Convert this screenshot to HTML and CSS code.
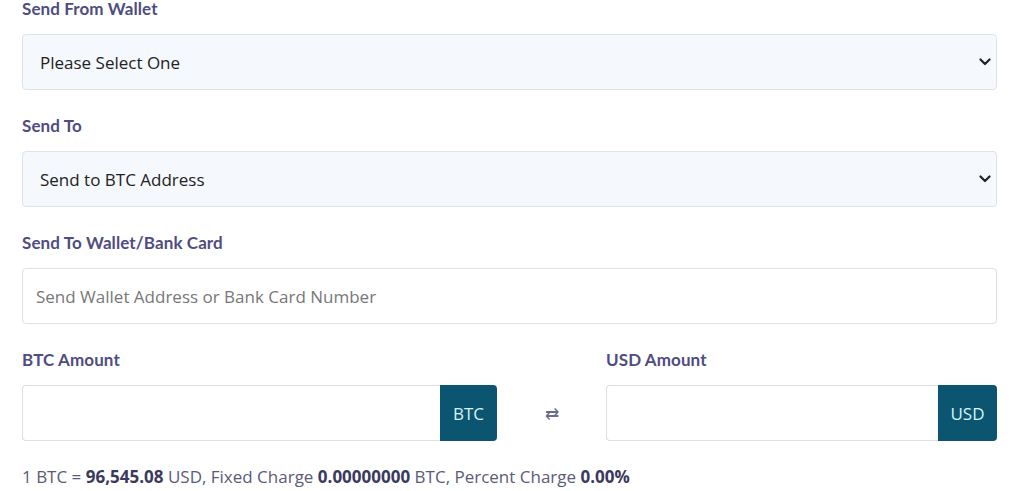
FILE: index.html
```html
<!DOCTYPE html>
<html>
<head>
<meta charset="utf-8">
<link rel="stylesheet" href="styles.css">
</head>
<body>
<form class="form">
  <div class="group">
    <label class="label">Send From Wallet</label>
    <div class="select-wrap">
      <div class="select">Please Select One</div>
      <svg class="chev" width="12" height="8" viewBox="0 0 12 8"><path d="M1.5 1.5 L6 6 L10.5 1.5" fill="none" stroke="#222" stroke-width="2.2" stroke-linecap="round" stroke-linejoin="round"/></svg>
    </div>
  </div>
  <div class="group">
    <label class="label">Send To</label>
    <div class="select-wrap">
      <div class="select">Send to BTC Address</div>
      <svg class="chev" width="12" height="8" viewBox="0 0 12 8"><path d="M1.5 1.5 L6 6 L10.5 1.5" fill="none" stroke="#222" stroke-width="2.2" stroke-linecap="round" stroke-linejoin="round"/></svg>
    </div>
  </div>
  <div class="group">
    <label class="label">Send To Wallet/Bank Card</label>
    <div class="input placeholder">Send Wallet Address or Bank Card Number</div>
  </div>
  <div class="amounts">
    <div class="amount">
      <label class="label">BTC Amount</label>
      <div class="input-group">
        <div class="input grow"></div>
        <span class="addon">BTC</span>
      </div>
    </div>
    <div class="swap">⇄</div>
    <div class="amount">
      <label class="label">USD Amount</label>
      <div class="input-group">
        <div class="input grow"></div>
        <span class="addon addon-usd">USD</span>
      </div>
    </div>
  </div>
  <p class="rate">1 BTC = <b>96,545.08</b> USD, Fixed Charge <b>0.00000000</b> BTC, Percent Charge <b>0.00%</b></p>
</form>
</body>
</html>
```

FILE: styles.css
```css
html, body {
  margin: 0;
  padding: 0;
  background: #fff;
}
body {
  font-family: "Open Sans", "Liberation Sans", sans-serif;
}
.form {
  width: 975px;
  margin-left: 22px;
}
.group {
  display: flex;
  flex-direction: column;
  margin-bottom: 27px;
}
.label {
  display: block;
  font-family: "Lato", "Noto Sans", sans-serif;
  font-weight: 700;
  font-size: 17px;
  line-height: 18px;
  color: #4f4d80;
  margin-bottom: 16px;
  letter-spacing: 0.1px;
}
.select-wrap {
  position: relative;
}
.select {
  box-sizing: border-box;
  height: 56px;
  display: flex;
  align-items: center;
  padding-left: 17px;
  background: #f5f8fc;
  border: 1px solid #dfe3e8;
  border-radius: 4px;
  font-size: 17px;
  color: #222;
}
.chev {
  position: absolute;
  right: 6px;
  top: 24px;
}
.input {
  box-sizing: border-box;
  height: 56px;
  display: flex;
  align-items: center;
  padding-left: 13px;
  background: #fff;
  border: 1px solid #dcdfe3;
  border-radius: 4px;
  font-size: 17px;
}
.placeholder {
  color: #777;
}
.amounts {
  display: grid;
  grid-template-columns: 475px 1fr 391px;
  align-items: end;
}
.amount {
  display: flex;
  flex-direction: column;
}
.input-group {
  display: flex;
  height: 56px;
}
.grow {
  flex: 1;
  border-top-right-radius: 0;
  border-bottom-right-radius: 0;
  border-right: none;
}
.addon {
  width: 57px;
  display: flex;
  align-items: center;
  justify-content: center;
  background: #0b5570;
  color: #d6f3f6;
  font-size: 17px;
  border-radius: 0 4px 4px 0;
}
.addon-usd {
  width: 59px;
}
.swap {
  height: 56px;
  display: flex;
  align-items: center;
  justify-content: center;
  color: #6b6a8a;
  font-size: 17px;
}
.rate {
  margin: 24px 0 0;
  font-size: 17px;
  line-height: 23px;
  color: #5b5b78;
}
.rate b {
  font-weight: 700;
  color: #3b3a5e;
}
```
